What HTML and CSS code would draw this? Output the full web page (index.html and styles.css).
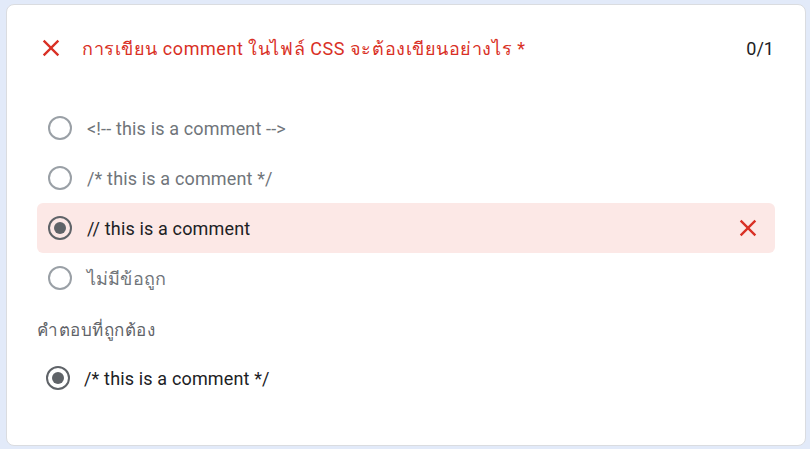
FILE: index.html
```html
<!DOCTYPE html>
<html lang="th">
<head>
<meta charset="utf-8">
<link rel="stylesheet" href="styles.css">
</head>
<body>
<div class="card">
  <div class="header">
    <svg class="x-icon head-x" viewBox="0 0 24 24"><path d="M19 6.41L17.59 5 12 10.59 6.41 5 5 6.41 10.59 12 5 17.59 6.41 19 12 13.41 17.59 19 19 17.59 13.41 12z"/></svg>
    <div class="question">การเขียน comment ในไฟล์ CSS จะต้องเขียนอย่างไร *</div>
    <div class="score">0/1</div>
  </div>
  <div class="options">
    <div class="option"><span class="radio"></span><span class="label">&lt;!-- this is a comment --&gt;</span></div>
    <div class="option"><span class="radio"></span><span class="label">/* this is a comment */</span></div>
    <div class="option wrong"><span class="radio checked"></span><span class="label">// this is a comment</span>
      <svg class="x-icon row-x" viewBox="0 0 24 24"><path d="M19 6.41L17.59 5 12 10.59 6.41 5 5 6.41 10.59 12 5 17.59 6.41 19 12 13.41 17.59 19 19 17.59 13.41 12z"/></svg>
    </div>
    <div class="option"><span class="radio"></span><span class="label">ไม่มีข้อถูก</span></div>
  </div>
  <div class="correct-title">คำตอบที่ถูกต้อง</div>
  <div class="option correct"><span class="radio checked"></span><span class="label">/* this is a comment */</span></div>
</div>
</body>
</html>
```
FILE: styles.css
```css
html, body {
  margin: 0;
  padding: 0;
}
body {
  background: #e2eaf9;
  font-family: Roboto, "Noto Sans", "DejaVu Sans", sans-serif;
  width: 810px;
  height: 449px;
  overflow: hidden;
}
.card {
  box-sizing: border-box;
  margin: 4px 4px 0 6px;
  width: 800px;
  height: 442px;
  background: #fff;
  border: 1px solid #dadce0;
  border-radius: 8px;
  padding: 23px 30px 0 30px;
  display: flex;
  flex-direction: column;
}
.header {
  display: flex;
  align-items: center;
  height: 40px;
}
.x-icon {
  fill: #d93025;
  flex: none;
}
.head-x {
  width: 28px;
  height: 28px;
  margin-right: 17px;
}
.question {
  flex: 1;
  color: #d93025;
  font-size: 18px;
  letter-spacing: 0.55px;
}
.score {
  color: #202124;
  font-size: 18px;
  margin-right: 1px;
}
.options {
  margin-top: 35px;
  display: flex;
  flex-direction: column;
}
.option {
  display: flex;
  align-items: center;
  height: 50px;
  padding-left: 11px;
  padding-right: 13px;
  border-radius: 6px;
}
.option .label {
  flex: 1;
  margin-left: 15px;
  font-size: 18px;
  letter-spacing: 0.15px;
  color: #70757a;
}
.radio {
  box-sizing: border-box;
  width: 24px;
  height: 24px;
  border: 2px solid #9aa0a6;
  border-radius: 50%;
  flex: none;
  display: flex;
  align-items: center;
  justify-content: center;
}
.radio.checked {
  border-color: #5f6368;
}
.radio.checked::after {
  content: "";
  width: 12px;
  height: 12px;
  border-radius: 50%;
  background: #5f6368;
}
.option.wrong {
  background: #fce8e6;
}
.option.wrong .label,
.option.correct .label {
  color: #202124;
}
.row-x {
  width: 28px;
  height: 28px;
}
.correct-title {
  margin-top: 15px;
  height: 24px;
  line-height: 24px;
  font-size: 17px;
  letter-spacing: 0.5px;
  color: #5f6368;
}
.option.correct {
  margin-top: 11px;
  padding-left: 9px;
}
.option.correct .label {
  margin-left: 14px;
}
```
